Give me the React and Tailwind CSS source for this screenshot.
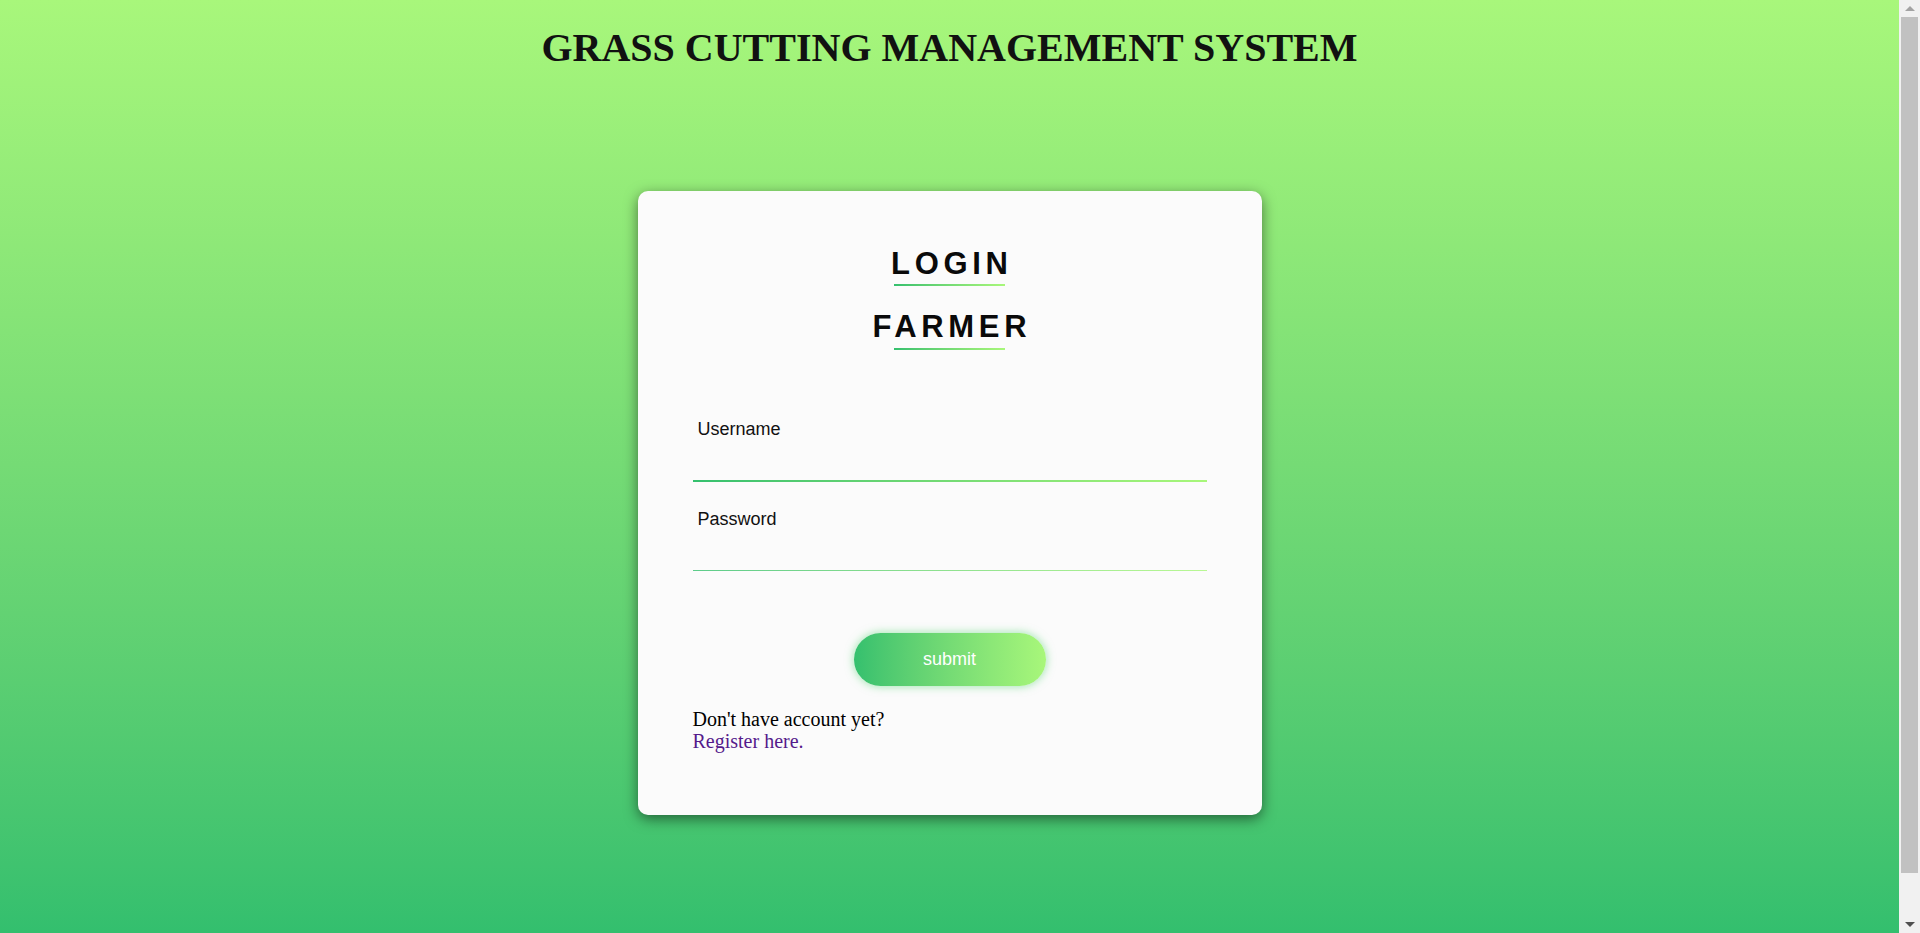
import React, { useState } from "react";

const GRADIENT = "bg-gradient-to-r from-[#34c06e] to-[#a8f77a]";

const Field = ({ label, type, value, onChange, active }) => (
  <div className="relative">
    <label className="block pl-[5px] text-[18px] leading-[18px] text-[#111]">
      {label}
    </label>
    <input
      type={type}
      value={value}
      onChange={onChange}
      className="block w-full h-[42px] bg-transparent outline-none text-[18px]"
    />
    {active ? (
      <div className={`h-[2px] ${GRADIENT}`} />
    ) : (
      <div className={`h-[1px] opacity-80 ${GRADIENT}`} />
    )}
  </div>
);

// window scrollbar as it appears in the screenshot
const ScrollBar = () => (
  <div className="w-[21px] h-screen bg-[#f1f1f1] flex flex-col items-center shrink-0">
    <div className="h-[17px] flex items-center justify-center">
      <div className="w-0 h-0 border-x-[5px] border-x-transparent border-b-[5px] border-b-[#a3a3a3]" />
    </div>
    <div className="w-[17px] h-[856px] bg-[#c1c1c1]" />
    <div className="flex-1" />
    <div className="h-[17px] flex items-center justify-center">
      <div className="w-0 h-0 border-x-[5px] border-x-transparent border-t-[5px] border-t-[#505050]" />
    </div>
  </div>
);

const App = () => {
  const [username, setUsername] = useState("");
  const [password, setPassword] = useState("");

  return (
    <div className="flex h-screen overflow-hidden">
      <div className="flex-1 h-full bg-gradient-to-b from-[#a8f77b] to-[#33bf6e] font-['Liberation_Sans',Arial,sans-serif]">
        <h1 className="pt-[28px] text-center text-[40px] leading-[40px] font-bold text-[#111] font-['Liberation_Serif','Times_New_Roman',serif]">
          GRASS CUTTING MANAGEMENT SYSTEM
        </h1>

        {/* Login card */}
        <div className="mx-auto mt-[123px] w-[624px] h-[624px] rounded-[10px] bg-[#fbfbfb] shadow-[0_4px_14px_rgba(0,0,0,0.5)] px-[55px] pt-[57px]">
          <div className="flex flex-col items-center">
            <h2 className="text-[31px] leading-[32px] font-bold tracking-[0.15em] text-[#0a0a0a] pl-[0.15em]">
              LOGIN
            </h2>
            <div className={`mt-[4px] w-[111px] h-[2px] ${GRADIENT}`} />
            <h2 className="mt-[25px] text-[31px] leading-[32px] font-bold tracking-[0.15em] text-[#0a0a0a] pl-[0.15em]">
              FARMER
            </h2>
            <div className={`mt-[5px] w-[111px] h-[2px] ${GRADIENT}`} />
          </div>

          <form className="mt-[70px]" onSubmit={(e) => e.preventDefault()}>
            <Field
              label="Username"
              type="text"
              value={username}
              onChange={(e) => setUsername(e.target.value)}
              active
            />
            <div className="mt-[28px]">
              <Field
                label="Password"
                type="password"
                value={password}
                onChange={(e) => setPassword(e.target.value)}
              />
            </div>

            <div className="mt-[62px] flex justify-center">
              <button
                type="submit"
                className={`w-[192px] h-[53px] rounded-full ${GRADIENT} text-white text-[18px] shadow-[0_0_10px_rgba(80,210,110,0.6)]`}
              >
                submit
              </button>
            </div>
          </form>

          <div className="mt-[22px] text-[20px] leading-[22px] text-black font-['Liberation_Serif','Times_New_Roman',serif]">
            <p>Don't have account yet?</p>
            <a href="#" className="text-[#551a8b]">
              Register here.
            </a>
          </div>
        </div>
      </div>
      <ScrollBar />
    </div>
  );
};

export default App;
